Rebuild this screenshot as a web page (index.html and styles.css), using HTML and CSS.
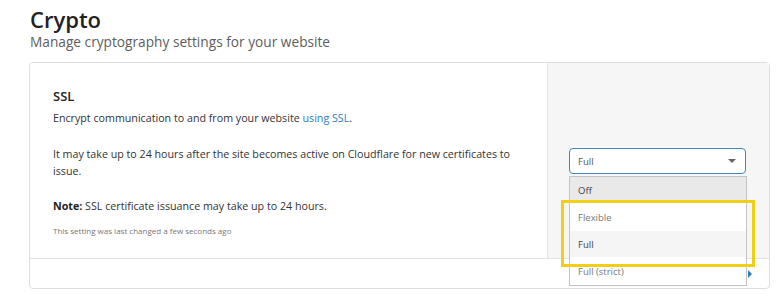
FILE: index.html
```html
<!DOCTYPE html>
<html lang="en">
<head>
    <meta charset="UTF-8">
    <title>Crypto</title>
    <link rel="stylesheet" href="styles.css">
</head>
<body>
    <header class="page-head">
        <h1>Crypto</h1>
        <p class="subtitle">Manage cryptography settings for your website</p>
    </header>

    <section class="card">
        <div class="card-row">
            <div class="card-main">
                <h2>SSL</h2>
                <p>Encrypt communication to and from your website <a href="#">using SSL</a>.</p>
                <p class="gap">It may take up to 24 hours after the site becomes active on Cloudflare for new certificates to issue.</p>
                <p class="gap note"><strong>Note:</strong> SSL certificate issuance may take up to 24 hours.</p>
                <p class="changed">This setting was last changed a few seconds ago</p>
            </div>
            <div class="card-aside">
                <div class="select">
                    <span>Full</span>
                    <span class="caret"></span>
                </div>
                <!-- open dropdown -->
                <ul class="options">
                    <li class="hover">Off</li>
                    <li class="tall">Flexible</li>
                    <li class="current">Full</li>
                    <li class="tall">Full (strict)</li>
                </ul>
                <div class="highlight"></div>
            </div>
        </div>
        <div class="card-foot">
            <span class="arrow"></span>
        </div>
    </section>
</body>
</html>
```

FILE: styles.css
```css
* {
    margin: 0;
    padding: 0;
    box-sizing: border-box;
}

body {
    font-family: 'Open Sans', 'Noto Sans', sans-serif;
    color: #333;
    background: #fff;
    padding: 5px 8px 0 30px;
}

.page-head h1 {
    font-size: 22px;
    font-weight: 600;
    color: #222;
    line-height: 28px;
}

.subtitle {
    font-size: 13.7px;
    color: #5e5e5e;
    line-height: 18px;
}

.card {
    margin-top: 11px;
    margin-left: -1px;
    width: 741px;
    border: 1px solid #dedede;
    border-radius: 4px;
}

.card-row {
    display: flex;
    height: 196px;
    border-bottom: 1px solid #e2e2e2;
}

.card-main {
    flex: 1;
    padding: 24px 20px 0 23px;
    font-size: 10.7px;
    line-height: 17px;
}

.card-main h2 {
    font-size: 13px;
    font-weight: 600;
    color: #222;
    line-height: 18px;
    margin-bottom: 5px;
}

.card-main p.gap {
    margin-top: 19px;
}

.card-main p.note {
    margin-top: 18px;
}

.card-main a {
    color: #2f7bbf;
    text-decoration: none;
}

.card-main strong {
    font-weight: 700;
    color: #222;
}

.card-main .changed {
    font-size: 8px;
    line-height: 12px;
    color: #777;
    margin-top: 10px;
}

.card-aside {
    width: 222px;
    background: #f6f6f6;
    border-left: 1px solid #e4e4e4;
    position: relative;
    padding: 85px 0 0 21px;
}

.select {
    width: 177px;
    height: 26px;
    background: #fff;
    border: 1px solid #3d86bf;
    border-radius: 4px;
    display: flex;
    align-items: center;
    justify-content: space-between;
    padding: 0 9px 0 8px;
    font-size: 9.5px;
    color: #555;
}

.caret {
    width: 0;
    height: 0;
    border-left: 4px solid transparent;
    border-right: 4px solid transparent;
    border-top: 4px solid #666;
}

.options {
    position: absolute;
    top: 113px;
    left: 21px;
    width: 178px;
    list-style: none;
    background: #fff;
    border: 1px solid #c4c4c4;
    font-size: 9.5px;
    color: #777;
    z-index: 2;
}

.options li {
    height: 26px;
    line-height: 26px;
    padding: 1px 0 0 8px;
}

.options li.tall {
    height: 28px;
    line-height: 28px;
}

.options li.hover {
    background: #e9e9e9;
    color: #444;
}

.options li.current {
    background: #f5f5f5;
    color: #444;
}

.highlight {
    position: absolute;
    top: 137px;
    left: 13px;
    width: 194px;
    height: 67px;
    border: 3px solid #f2cf14;
    z-index: 3;
}

.card-foot {
    height: 29px;
    display: flex;
    justify-content: flex-end;
    align-items: center;
    padding-right: 17px;
}

.arrow {
    width: 0;
    height: 0;
    border-top: 4px solid transparent;
    border-bottom: 4px solid transparent;
    border-left: 4px solid #2f7bbf;
}
```
